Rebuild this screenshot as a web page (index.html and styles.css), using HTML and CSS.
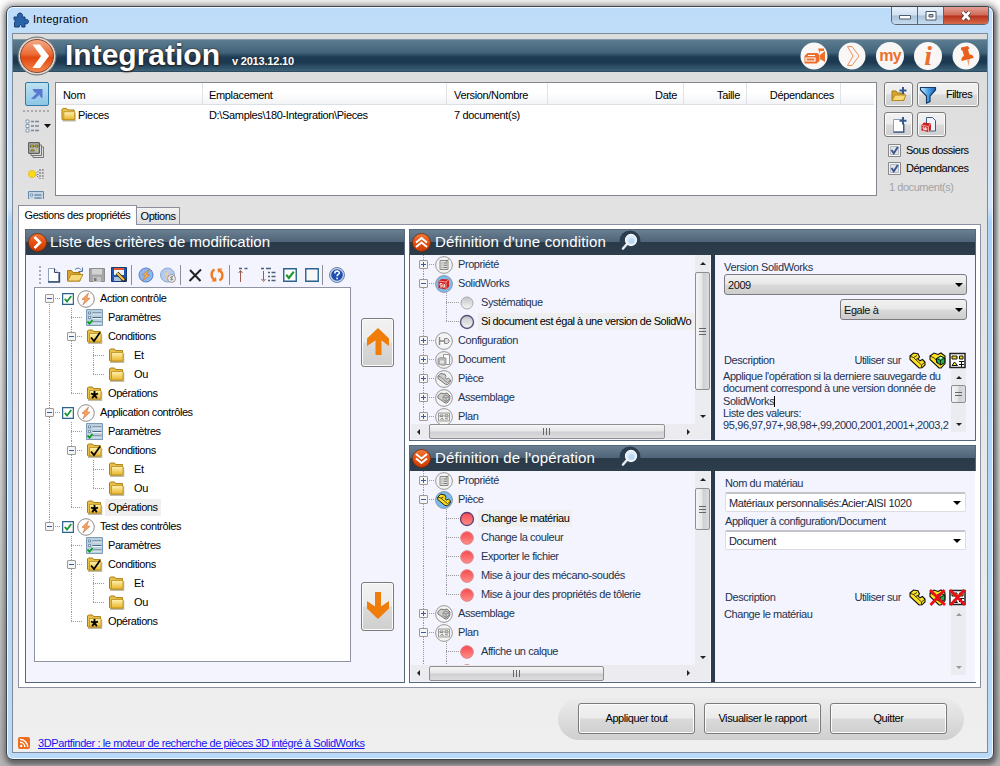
FILE: index.html
```html
<!DOCTYPE html>
<html lang="fr">
<head>
<meta charset="utf-8">
<title>Integration</title>
<link rel="stylesheet" href="styles.css">
</head>
<body>
<svg class="defs" width="0" height="0" aria-hidden="true">
  <defs>
    <linearGradient id="gold" x1="0" y1="0" x2="0" y2="1"><stop offset="0" stop-color="#fff3b0"/><stop offset="1" stop-color="#e9b52c"/></linearGradient>
    <linearGradient id="redb" x1="0" y1="0" x2="0" y2="1"><stop offset="0" stop-color="#f54a50"/><stop offset=".5" stop-color="#fb6a6a"/><stop offset="1" stop-color="#ff8f8a"/></linearGradient>
    <linearGradient id="greyb" x1="0" y1="0" x2="0" y2="1"><stop offset="0" stop-color="#c4c4c8"/><stop offset="1" stop-color="#f6f6f6"/></linearGradient>
    <linearGradient id="orb" x1="0" y1="0" x2="0" y2="1"><stop offset="0" stop-color="#f47b3c"/><stop offset=".5" stop-color="#e4500f"/><stop offset="1" stop-color="#c93c04"/></linearGradient>
    <linearGradient id="fun" x1="0" y1="0" x2="1" y2="0"><stop offset="0" stop-color="#d5f0ff"/><stop offset=".5" stop-color="#4aa3e6"/><stop offset="1" stop-color="#1b62b4"/></linearGradient>
    <symbol id="folder" viewBox="0 0 17 16"><path d="M2 14.600h13.500V6" fill="none" stroke="#8d8666" stroke-width="1.600" opacity=".55"/><path d="M1.500 13V2.500l1-1h4l1.200 1.600h6.800V13.500h-12z" fill="#e9c04a" stroke="#a97d12"/><path d="M3.500 5h11.500v8.500H3.500z" fill="url(#gold)" stroke="#b98d1d" stroke-width=".8"/></symbol>
    <symbol id="foldercheck" viewBox="0 0 17 16"><use href="#folder"/><path d="M5 9l3 3.500L14 4" fill="none" stroke="#000" stroke-width="1.700"/></symbol>
    <symbol id="folderstar" viewBox="0 0 17 16"><use href="#folder"/><path d="M8.500 5.500v4M8.500 9.300L5 8M8.500 9.300L12 8M8.500 9.300l-2.300 3.400M8.500 9.300l2.300 3.400" fill="none" stroke="#000" stroke-width="1.800"/></symbol>
    <symbol id="params" viewBox="0 0 17 17"><path d="M.5.5h16v16H.5z" fill="#bccfdd" stroke="#7b9db8"/><path d="M6.500 4h9M6.500 8.500h9M6.500 13h9" stroke="#47698a"/><path d="M6.500 5h9M6.500 9.500h9M6.500 14h9" stroke="#eef6fb"/><path d="M2.500 3h2v2h-2zM2.500 7.500h2v2h-2z" fill="#fff" stroke="#5b7a97" stroke-width=".8"/><path d="M1.500 12.500l2 2.200L6.500 11" stroke="#0a9a1c" stroke-width="1.800" fill="none"/></symbol>
    <symbol id="bolt" viewBox="0 0 18 18"><circle cx="9" cy="9" r="8.300" fill="#fdfdfd" stroke="#8e8e8e"/><path d="M11.500 3L5 9.300l3 .4L5.800 15 13 8.300l-3.200-.4z" fill="#f9a457" stroke="#c4724a" stroke-width=".6"/></symbol>
    <symbol id="boltblue" viewBox="0 0 18 18"><circle cx="9" cy="9" r="7" fill="#8db5ee" stroke="#5780c4"/><path d="M12 3.500L5.500 9l3 .5L5.500 15l7-6-3-.6z" fill="#fbb24f" stroke="#b87430" stroke-width=".6"/></symbol>
    <symbol id="boltgrey" viewBox="0 0 18 18"><circle cx="8.500" cy="9" r="7" fill="#b4cbf0" stroke="#8da8d4"/><path d="M11 3.500L5 9l3 .5L5.500 15l6-6-3-.6z" fill="#f3cb97"/><circle cx="12.500" cy="12.500" r="4" fill="#e6e6e6" stroke="#999"/><path d="M14 11c-2-1-3 .8-1.500 1.400s1 2-1 1.200" fill="none" stroke="#666"/></symbol>
    <symbol id="new" viewBox="0 0 18 18"><path d="M4.500 2.500h6l4 4v9h-10z" fill="#fff" stroke="#8ea0ba"/><path d="M4 16h11.500V6" stroke="#33496e" stroke-width="1.300" fill="none"/><path d="M10.500 2.500v4h4" fill="#dce6f4" stroke="#33496e"/></symbol>
    <symbol id="open" viewBox="0 0 18 18"><path d="M1.500 15V4.500h4l1.500 2h7V15z" fill="#d9a531" stroke="#a67a14"/><path d="M1.500 15L5 8.500h12L13.500 15z" fill="#f8d97a" stroke="#b58a1e"/><path d="M9 3.500c3-2.500 5-1 6.500 1M16.500 1.500v4h-4" fill="none" stroke="#54749a"/></symbol>
    <symbol id="save" viewBox="0 0 18 18"><path d="M1.500 2.500h15v13h-15z" fill="#a6a6a6" stroke="#8c8c8c"/><path d="M4 3h10v5.500H4z" fill="#d2d2d2"/><path d="M5 11h8v5H5z" fill="#c4c4c4"/><path d="M6 12h2.500v3H6z" fill="#777"/></symbol>
    <symbol id="saveas" viewBox="0 0 18 18"><path d="M1.500 1.500h15v14h-15z" fill="#1f56b0" stroke="#173a78"/><path d="M4 2h10v7H4z" fill="#eef3fb"/><path d="M4 2h10v2H4z" fill="#e4582a"/><path d="M4 11h7v4H4z" fill="#a9bfdf"/><path d="M7 7l8 8" stroke="#2b2410" stroke-width="3.800"/><path d="M7 7l7 7" stroke="#f5c341" stroke-width="2.200"/></symbol>
    <symbol id="del" viewBox="0 0 18 18"><path d="M4 4l10.500 11M15 3.500L3.500 15" stroke="#222" stroke-width="2"/></symbol>
    <symbol id="sync" viewBox="0 0 18 18"><path d="M6.500 3.500c-3.500 2-4 7-.5 10" fill="none" stroke="#f07a1a" stroke-width="2.400"/><path d="M8.500 15.500H3.500L8 11z" fill="#f07a1a"/><path d="M11.500 14.500c3.500-2 4-7 .5-10" fill="none" stroke="#f07a1a" stroke-width="2.400"/><path d="M9.500 2.500h5L10 7z" fill="#f07a1a"/></symbol>
    <symbol id="lines1" viewBox="0 0 18 18"><path d="M5.500 5v11M3.500 7l2-2.500L7.500 7" fill="none" stroke="#9a5a4c"/><path d="M4 2.500h3M9.500 2.500h3" stroke="#4d5f77" stroke-width="1.500"/></symbol>
    <symbol id="lines2" viewBox="0 0 18 18"><path d="M4.500 5v9M2.500 13l2 2.500 2-2.500" fill="none" stroke="#9a5a4c"/><path d="M2 2.500h3M7 2.500h5M9 6.500h2M12.500 6.500h4M9 10.500h2M12.500 10.500h4M9 14.500h2M12.500 14.500h4" stroke="#4d5f77" stroke-width="1.400"/></symbol>
    <symbol id="chk" viewBox="0 0 13 13"><path d="M.7.7h11.600v11.600H.7z" fill="#fff" stroke="#2b6290" stroke-width="1.300"/><path d="M3 6.300l2.500 3L10 3.300" fill="none" stroke="#1c9a2c" stroke-width="2"/></symbol>
    <symbol id="unchk" viewBox="0 0 13 13"><path d="M.7.7h11.600v11.600H.7z" fill="#f7f7f5" stroke="#2b6290" stroke-width="1.300"/></symbol>
    <symbol id="wincheck" viewBox="0 0 13 13"><path d="M.5.5h12v12H.5z" fill="#f5f5f5" stroke="#85878a"/><path d="M2.500 2.500h8v8h-8z" fill="#dfe3ea" stroke="#b5b9bf"/><path d="M3.500 6l2.300 3.200L9.800 3" fill="none" stroke="#3c538f" stroke-width="1.900"/></symbol>
    <symbol id="help" viewBox="0 0 18 18"><circle cx="9" cy="9" r="7.500" fill="#c5d4ea" stroke="#6c83a8"/><circle cx="9" cy="9" r="5.800" fill="#1e4fae"/><path d="M6.800 7.500c0-3.200 4.600-3 4.600-.5 0 1.500-2.300 1.500-2.300 3.200M9.100 11.500v1.700" fill="none" stroke="#fff" stroke-width="1.500"/></symbol>
    <symbol id="gdoc" viewBox="0 0 18 18"><circle cx="9" cy="9" r="8.400" fill="#f4f4f4" stroke="#999"/><path d="M5 4.500h8v9H5z" fill="#e2e2e2" stroke="#888"/><path d="M6.500 7h1M8.500 7h3.500M6.500 9.200h1M8.500 9.200h3.500M6.500 11.500h1M8.500 11.500h3.500" stroke="#777"/><path d="M11 6l3-3.500" stroke="#888"/></symbol>
    <symbol id="gsw" viewBox="0 0 18 18"><circle cx="9" cy="9" r="8.400" fill="#7dbbe9" stroke="#8797a8"/><path d="M3.500 6l3-2 7.500.5v7l-3 3-7.500-1.500z" fill="#cf1f1f"/><path d="M3.500 6l7.500 1v7.500M11 7l3-2.500" fill="none" stroke="#f39b95"/><path d="M7 8.500H5v1.700h2V12H5M8 8.500v3.700h1.500V9" stroke="#fff" fill="none" stroke-width=".8"/></symbol>
    <symbol id="gconf" viewBox="0 0 18 18"><circle cx="9" cy="9" r="8.400" fill="#f4f4f4" stroke="#999"/><path d="M4.500 5v8M4.500 9h4.500" stroke="#888" stroke-width="1.400"/><path d="M9.500 6.500h3l1.500 1.500v2l-1.500 1.500h-3z" fill="#ddd" stroke="#888"/></symbol>
    <symbol id="gdocu" viewBox="0 0 18 18"><circle cx="9" cy="9" r="8.400" fill="#eee" stroke="#999"/><path d="M8.500 3.500h6v10h-6z" fill="#fafafa" stroke="#999"/><path d="M3 8l2-1.500 6 .5v6l-2 1.500-6-1.500z" fill="#b5b5b5" stroke="#888" stroke-width=".7"/><path d="M5 9.500h4v3H5z" fill="#e5e5e5"/></symbol>
    <symbol id="gpart" viewBox="0 0 18 18"><circle cx="9" cy="9" r="8.400" fill="#f4f4f4" stroke="#999"/><path d="M3 6l3-2.500 4 .8 1 2.200-1 1.200 1.500 1.300 2-.8 2 1.800-.5 2.500-2.500 2-2-.2L3 8.500z" fill="#cfcfcf" stroke="#777"/><path d="M3 6l3 1.200 6.500 5.300 2.500-2" stroke="#888" fill="none"/></symbol>
    <symbol id="gasm" viewBox="0 0 18 18"><circle cx="9" cy="9" r="8.400" fill="#f4f4f4" stroke="#999"/><path d="M3 6.500l3-2.500 3 .8 3-.8 3 3-.5 4-2.500 3-2-.2L3 9z" fill="#cfcfcf" stroke="#777"/><path d="M8 7.500l3-1.500 3 1.500v3l-3 2-3-2zM8 7.500l3 1.500 3-1.500M11 9v3.500" stroke="#888" fill="none"/></symbol>
    <symbol id="gplan" viewBox="0 0 18 18"><circle cx="9" cy="9" r="8.400" fill="#f4f4f4" stroke="#999"/><path d="M3.500 5h11v8h-11z" fill="#ececec" stroke="#999"/><path d="M5 7h3v1.500H5zM10 6.800h3v2h-3zM5.500 12l1.500-2 1.500 2M10 10.800h3" fill="none" stroke="#888"/></symbol>
    <symbol id="ypart" viewBox="0 0 18 18"><circle cx="9" cy="9" r="8.400" fill="#7dbbe9" stroke="#7f93a8"/><path d="M2.800 6l3-2.800 4.200.8 1 2.500-1 1.200 1.500 1.300 2-.8 2 1.800-.5 2.500-2.500 2.200-2.500-.2L2.800 8.500z" fill="#ffe11a" stroke="#222"/><path d="M3 6l3 1.200 6.500 5.500 2.500-2M6 7.200L8.500 6" stroke="#222" fill="none" stroke-width=".8"/></symbol>
    <symbol id="part" viewBox="0 0 17 17"><path d="M1 4L4.500 1l4.500.8L10.500 5 9 7l2 1.800 2.500-1.300L16 10v3l-3 2.800-3 .2L1 7.500z" fill="#ffe21f" stroke="#111" stroke-width="1.100"/><path d="M1 4.200l3.500 1.300 8 7.500 3.500-3M4.500 5.500L8 3.500M12.500 13v3M6.500 7.500L9 6.500" stroke="#111" fill="none" stroke-width=".8"/></symbol>
    <symbol id="asm" viewBox="0 0 17 17"><path d="M1 4L5 1l4 1.500L12 1l4 3v7.500L12 16h-2L1 7.500z" fill="#ffe21f" stroke="#111" stroke-width="1.100"/><path d="M7.500 6.500l4-2.500 4.300 2v4.500l-4 2.500-4.300-2.500z" fill="#23b34a" stroke="#111"/><path d="M7.500 6.500l4 2 4.300-2.500M11.500 8.500V13M1 4.200l4.500 1.800 3.500 5" stroke="#111" fill="none" stroke-width=".8"/><path d="M10 6l1.800-1 1.800.9-1.800 1.200z" fill="#fff"/></symbol>
    <symbol id="drw" viewBox="0 0 17 17"><path d="M1 1.500h15v14H1z" fill="#fff" stroke="#222" stroke-width="1.500"/><path d="M3 4h5v3H3zM10.500 4h3.500v3h-3.500zM3 13.500L5.500 10l3 3.500z" fill="#f5d81c" stroke="#111"/><path d="M10 9.500h5M10 12.500h5M12.500 9v6" stroke="#111"/></symbol>
    <symbol id="cross" viewBox="0 0 17 17"><path d="M1 1l15 15M15.500 1L1.500 16" stroke="#e80f16" stroke-width="2.800"/></symbol>
    <symbol id="red" viewBox="0 0 16 16"><circle cx="8" cy="8" r="6.300" fill="url(#redb)" stroke="#dd8080"/></symbol>
    <symbol id="redsel" viewBox="0 0 16 16"><circle cx="8" cy="8" r="6.500" fill="url(#redb)" stroke="#5e3f78" stroke-width="1.300"/></symbol>
    <symbol id="grey" viewBox="0 0 16 16"><circle cx="8" cy="8" r="6" fill="url(#greyb)" stroke="#aaa"/></symbol>
    <symbol id="greysel" viewBox="0 0 16 16"><circle cx="8" cy="8" r="6.500" fill="url(#greyb)" stroke="#55557c" stroke-width="1.400"/></symbol>
    <symbol id="loupe" viewBox="0 0 22 25"><circle cx="11" cy="11" r="10.500" fill="#2b3c4c"/><path d="M8 14l-4 4.500" stroke="#dfe9f2" stroke-width="2.600" stroke-linecap="round"/><circle cx="12" cy="10" r="5.500" fill="#dcebf8" stroke="#f8fbff" stroke-width="1.300"/><circle cx="12.500" cy="11" r="3" fill="#bcd7f0"/></symbol>
    <symbol id="rnd" viewBox="0 0 19 19"><circle cx="9.500" cy="9.500" r="9" fill="url(#orb)" stroke="#7a2a08" stroke-width=".8"/></symbol>
  </defs>
</svg>

<div class="window">
  <header class="titlebar">
    <svg class="puzzle" viewBox="0 0 16 16"><path d="M1 5h4c-1.500-2 0-4 2-4s3.300 2 2 4h3v3c2-1.300 3.500-.3 3.500 1.500S14 12.500 12 11.500V15H8.700c.8-3-3-3-2.400 0H1.500v-4.500C2.500 9 2.300 8 1 7.500z" fill="#2a62a8" stroke="#173f77"/></svg>
    <span class="caption">Integration</span>
    <div class="winbtns">
      <div class="wb"><svg viewBox="0 0 26 17"><path d="M7.500 8.500h11v3.500h-11z" fill="#fff" stroke="#4f5b6b"/></svg></div>
      <div class="wb"><svg viewBox="0 0 26 17"><path d="M8 4.500h10v8.500H8z" fill="#fff" stroke="#4f5b6b"/><path d="M11 7.500h4v2.500h-4z" fill="#a9bdd3" stroke="#4f5b6b"/></svg></div>
      <div class="wb close"><svg viewBox="0 0 45 17"><path d="M18.500 5l7 7.500M25.500 5l-7 7.500" stroke="#5a3a40" stroke-width="4.400"/><path d="M18.500 5l7 7.500M25.500 5l-7 7.500" stroke="#fff" stroke-width="2.600"/></svg></div>
    </div>
  </header>

  <main class="client">
    <div class="banner">
      <svg class="logo" viewBox="0 0 40 40"><defs><linearGradient id="lg" x1="0" y1="0" x2="0" y2="1"><stop offset="0" stop-color="#f5ab88"/><stop offset=".45" stop-color="#ea6a35"/><stop offset=".55" stop-color="#e2470e"/><stop offset="1" stop-color="#f68a4e"/></linearGradient></defs><circle cx="20" cy="20" r="19" fill="#d9d6d5" stroke="#6d6a6a"/><circle cx="20" cy="20" r="16.500" fill="url(#lg)" stroke="#8b4a30"/><path d="M15.500 8.500h7.500L32 20 23 32h-7.500l8.500-12z" fill="#fff"/></svg>
      <h1>Integration</h1>
      <span class="version">v 2013.12.10</span>
      <div class="round-icons">
        <svg viewBox="0 0 28 28"><circle cx="14" cy="14" r="13.500" fill="#f9f7f5"/><path d="M4.500 14l3-3h10l2 2v6l-3 2.500H4.500z" fill="#ec6f2c"/><path d="M20 13l5-4v11l-5-3zM18 6.500h6v2.500h-4v3" fill="#ec6f2c"/><path d="M6 16h9v3H6zM8 13.500h7" fill="none" stroke="#fff" stroke-width="1.200"/></svg>
        <svg viewBox="0 0 28 28"><circle cx="14" cy="14" r="13.500" fill="#f9f7f5"/><path d="M9.500 4.500h4.500l7 9.500-7 9.500H9.500l5.500-9.500z" fill="none" stroke="#f0905c"/></svg>
        <div class="my">my</div>
        <div class="inf">i</div>
        <svg viewBox="0 0 28 28"><circle cx="14" cy="14" r="13.500" fill="#f9f7f5"/><path d="M9 5.500l7-1.500 1.500 2.500-1.500 1 1.500 5c3 .2 4 1.500 4 3.500L9.500 19c-.5-2.500.5-4 2.500-5l-1.500-5.500-1.500-.5z" fill="#e85f1c"/><path d="M15 17.500l1.800 7 .8-7.500z" fill="#efa27c"/></svg>
      </div>
    </div>

    <section class="files">
      <div class="sidebar">
        <div class="sb-on"><svg viewBox="0 0 24 24"><path d="M7 6.500h11V17l-3-2.500V12.500l-5.500 5H5.500l6.500-7H9.500z" fill="#5b78d0"/></svg></div>
        <div class="sb-dots"></div>
        <svg class="sb-list" viewBox="0 0 26 14"><path d="M1 1h3v3H1zM1 5.500h3v3H1zM1 10h3v3H1z" fill="#fff" stroke="#8596b0"/><path d="M6 2.500h3M10 2.500h4M6 7h3M10 7h4M6 11.500h3M10 11.500h4" stroke="#7a879a" stroke-width="1.400"/><path d="M19 5h7l-3.500 4z" fill="#111"/></svg>
        <svg class="sb-i2" viewBox="0 0 16 16"><path d="M5 5h10.500v10.500H5z" fill="#ddd" stroke="#777"/><path d="M3 3h10.500v10.500H3z" fill="#ddd" stroke="#777"/><path d="M.7.7h10.600v10.600H.7z" fill="#b9b9a8" stroke="#444"/><path d="M2.500 3h3v2h-3zM7 3h3v2H7zM2.500 9l2-2 2 2z" fill="#e8d020" stroke="#333" stroke-width=".6"/></svg>
        <svg class="sb-i3" viewBox="0 0 16 12"><circle cx="4" cy="6" r="3.600" fill="#fbdc12" stroke="#e0a818" stroke-width=".6"/><path d="M8.500 5l2-2M8.500 6.500h2M8.500 7.500l2 2" stroke="#888"/><path d="M12 1v10M14.800 1v10" stroke="#999" stroke-width="1.800" stroke-dasharray="2 1"/></svg>
        <svg class="sb-i4" viewBox="0 0 16 8"><path d="M.5 8V.5h15V8" fill="#c4d6e6" stroke="#6688a6"/><path d="M2.500 3h2v2h-2z" fill="#fff" stroke="#5b7a97" stroke-width=".7"/><path d="M6.500 4h7M6.500 7h7" stroke="#47698a"/></svg>
      </div>
      <div class="filelist">
        <div class="fl-head">
          <span class="c1">Nom</span><span class="c2">Emplacement</span><span class="c3">Version/Nombre</span><span class="c4 r">Date</span><span class="c5 r">Taille</span><span class="c6 r">Dépendances</span><span class="c7"></span>
        </div>
        <div class="fl-row"><span class="c1"><svg class="fi" viewBox="0 0 17 16"><use href="#folder"/></svg>Pieces</span><span class="c2">D:\Samples\180-Integration\Pieces</span><span class="c3">7 document(s)</span></div>
      </div>
      <div class="actions">
        <div class="arow">
          <button class="btn sq"><svg viewBox="0 0 18 18"><path d="M2 14.500V5h4l1.500 2H14v7.500z" fill="#d9a531" stroke="#a67a14"/><path d="M2 14.500L5 9h11l-2.500 5.500z" fill="#f8d97a" stroke="#b58a1e"/><path d="M13 1v7M9.500 4.500h7" stroke="#35588e" stroke-width="2"/></svg></button>
          <button class="btn filt"><svg viewBox="0 0 18 18"><path d="M1.500 1.500h15v2.500L11 10v5.500L7.500 17v-7L1.500 4z" fill="url(#fun)" stroke="#183a66" stroke-width="1.200"/></svg><span>Filtres</span></button>
        </div>
        <div class="arow">
          <button class="btn sq"><svg viewBox="0 0 18 18"><path d="M3.500 3.500h10V16h-10z" fill="#fff" stroke="#8aa0c0"/><path d="M3.500 16.200h10.300V8" stroke="#33517f" fill="none" stroke-width="1.300"/><path d="M13 1v7.500M9.500 4.700h7" stroke="#35588e" stroke-width="2"/></svg></button>
          <button class="btn sq sw"><svg viewBox="0 0 18 18"><path d="M6.500 1.500h6l3 3V15h-9z" fill="#eef3fa" stroke="#3d5a86"/><path d="M1.500 9l2.500-2.500 7 1v6L8.500 16l-7-1.500z" fill="#c81e1e"/><path d="M1.500 9l7 1.500V16M8.500 10.500l2.500-3" stroke="#f2a09a" fill="none"/><path d="M4.500 11H3v1.500h1.500V14H3M5.500 11v3h1.300v-2.500" stroke="#fff" fill="none" stroke-width=".8"/></svg></button>
        </div>
        <label class="ck"><svg viewBox="0 0 13 13"><use href="#wincheck"/></svg>Sous dossiers</label>
        <label class="ck"><svg viewBox="0 0 13 13"><use href="#wincheck"/></svg>Dépendances</label>
        <div class="count">1 document(s)</div>
      </div>
    </section>

    <div class="tabs"><div class="tab on">Gestions des propriétés</div><div class="tab">Options</div></div>

    <section class="page">
      <div class="panel left">
        <div class="phead"><svg class="orbi" viewBox="0 0 19 19"><use href="#rnd"/><path d="M6.500 4l5.500 5.500-5.500 5.500" fill="none" stroke="#fff" stroke-width="2.600"/></svg><h2 class="w1">Liste des critères de modification</h2></div>
        <div class="lbody">
          <div class="lcol">
            <div class="toolbar">
              <i class="grip"></i>
              <svg><use href="#new"/></svg><svg><use href="#open"/></svg><svg><use href="#save"/></svg><svg><use href="#saveas"/></svg>
              <i class="sep"></i><svg><use href="#boltblue"/></svg><svg><use href="#boltgrey"/></svg>
              <i class="sep"></i><svg><use href="#del"/></svg><svg><use href="#sync"/></svg>
              <i class="sep"></i><svg><use href="#lines1"/></svg><svg class="wide"><use href="#lines2"/></svg><svg class="c13"><use href="#chk"/></svg><svg class="c13"><use href="#unchk"/></svg>
              <i class="sep"></i><svg><use href="#help"/></svg>
            </div>
            <div class="tree crit">
              <div class="row"><i class="g first"><b></b></i><svg class="ck12"><use href="#chk"/></svg><svg class="i18"><use href="#bolt"/></svg><span>Action contrôle</span></div>
              <div class="row"><i class="g v"></i><i class="g v h"></i><svg class="i17"><use href="#params"/></svg><span>Paramètres</span></div>
              <div class="row"><i class="g v"></i><i class="g v h"><b></b></i><svg class="i17"><use href="#foldercheck"/></svg><span>Conditions</span></div>
              <div class="row"><i class="g v"></i><i class="g v"></i><i class="g v h"></i><svg class="i17"><use href="#folder"/></svg><span class="s2">Et</span></div>
              <div class="row"><i class="g v"></i><i class="g v"></i><i class="g l h"></i><svg class="i17"><use href="#folder"/></svg><span class="s2">Ou</span></div>
              <div class="row"><i class="g v"></i><i class="g l h"></i><svg class="i17"><use href="#folderstar"/></svg><span>Opérations</span></div>
              <div class="row"><i class="g v h"><b></b></i><svg class="ck12"><use href="#chk"/></svg><svg class="i18"><use href="#bolt"/></svg><span>Application contrôles</span></div>
              <div class="row"><i class="g v"></i><i class="g v h"></i><svg class="i17"><use href="#params"/></svg><span>Paramètres</span></div>
              <div class="row"><i class="g v"></i><i class="g v h"><b></b></i><svg class="i17"><use href="#foldercheck"/></svg><span>Conditions</span></div>
              <div class="row"><i class="g v"></i><i class="g v"></i><i class="g v h"></i><svg class="i17"><use href="#folder"/></svg><span class="s2">Et</span></div>
              <div class="row"><i class="g v"></i><i class="g v"></i><i class="g l h"></i><svg class="i17"><use href="#folder"/></svg><span class="s2">Ou</span></div>
              <div class="row"><i class="g v"></i><i class="g l h"></i><svg class="i17"><use href="#folderstar"/></svg><span class="hl">Opérations</span></div>
              <div class="row"><i class="g l h"><b></b></i><svg class="ck12"><use href="#chk"/></svg><svg class="i18"><use href="#bolt"/></svg><span>Test des contrôles</span></div>
              <div class="row"><i class="g"></i><i class="g v h"></i><svg class="i17"><use href="#params"/></svg><span>Paramètres</span></div>
              <div class="row"><i class="g"></i><i class="g v h"><b></b></i><svg class="i17"><use href="#foldercheck"/></svg><span>Conditions</span></div>
              <div class="row"><i class="g"></i><i class="g v"></i><i class="g v h"></i><svg class="i17"><use href="#folder"/></svg><span class="s2">Et</span></div>
              <div class="row"><i class="g"></i><i class="g v"></i><i class="g l h"></i><svg class="i17"><use href="#folder"/></svg><span class="s2">Ou</span></div>
              <div class="row"><i class="g"></i><i class="g l h"></i><svg class="i17"><use href="#folderstar"/></svg><span>Opérations</span></div>
            </div>
          </div>
          <div class="moves">
            <button class="btn mv"><svg viewBox="0 0 22 27"><path d="M11 0l11 10.500V18l-7.500-5.500V27h-6V12.500L0 18v-7.500z" fill="#f07c0a"/></svg></button>
            <button class="btn mv"><svg viewBox="0 0 22 27"><path d="M11 27L0 16.500V9l8 5.500V0h6v14.500L22 9v7.500z" fill="#f07c0a"/></svg></button>
          </div>
        </div>
      </div>

      <div class="rightcol">
        <div class="panel cond">
          <div class="phead"><svg class="orbi" viewBox="0 0 19 19"><use href="#rnd"/><path d="M4 9.500l5.500-4.500L15 9.500M4 14l5.500-4.500L15 14" fill="none" stroke="#fff" stroke-width="2"/></svg><h2 class="w2">Définition d'une condition</h2><svg class="loupe"><use href="#loupe"/></svg></div>
          <div class="pbody">
            <div class="scroller">
              <div class="tree kinds">
                <div class="row"><i class="g v h"><b class="plus"></b></i><svg class="i18"><use href="#gdoc"/></svg><span>Propriété</span></div>
                <div class="row"><i class="g v h"><b></b></i><svg class="i18"><use href="#gsw"/></svg><span>SolidWorks</span></div>
                <div class="row"><i class="g v"></i><i class="g v h"></i><svg class="i16"><use href="#grey"/></svg><span>Systématique</span></div>
                <div class="row"><i class="g v"></i><i class="g l h"></i><svg class="i16"><use href="#greysel"/></svg><span class="hl fill">Si document est égal à une version de SolidWo</span></div>
                <div class="row"><i class="g v h"><b class="plus"></b></i><svg class="i18"><use href="#gconf"/></svg><span>Configuration</span></div>
                <div class="row"><i class="g v h"><b class="plus"></b></i><svg class="i18"><use href="#gdocu"/></svg><span>Document</span></div>
                <div class="row"><i class="g v h"><b class="plus"></b></i><svg class="i18"><use href="#gpart"/></svg><span>Pièce</span></div>
                <div class="row"><i class="g v h"><b class="plus"></b></i><svg class="i18"><use href="#gasm"/></svg><span>Assemblage</span></div>
                <div class="row"><i class="g l h"><b class="plus"></b></i><svg class="i18"><use href="#gplan"/></svg><span>Plan</span></div>
              </div>
              <div class="vs"><i class="up"></i><div class="thumb t1"></div><i class="dn"></i></div>
              <div class="hs"><i class="lf"></i><div class="thumb h1"></div><i class="rt"></i></div>
            </div>
            <div class="splitter"></div>
            <div class="form f1">
              <div class="lab">Version SolidWorks</div>
              <div class="combo grad">2009<i></i></div>
              <div class="combo grad small">Egale à<i></i></div>
              <div class="dline"><span>Description</span><span class="use">Utiliser sur</span><svg><use href="#part"/></svg><svg><use href="#asm"/></svg><svg class="lasti"><use href="#drw"/></svg></div>
              <div class="desc"><p>Applique l'opération si la derniere sauvegarde du<br>document correspond à une version donnée de<br>SolidWorks<i class="caret"></i><br>Liste des valeurs:<br><span class="vals">95,96,97,97+,98,98+,99,2000,2001,2001+,2003,2</span></p><div class="vs mini"><i class="up"></i><div class="thumb t3"></div><i class="dn"></i></div></div>
            </div>
          </div>
        </div>

        <div class="panel oper">
          <div class="phead"><svg class="orbi" viewBox="0 0 19 19"><use href="#rnd"/><path d="M4 5l5.500 4.500L15 5M4 9.500l5.500 4.500L15 9.500" fill="none" stroke="#fff" stroke-width="2"/></svg><h2 class="w3">Définition de l'opération</h2><svg class="loupe"><use href="#loupe"/></svg></div>
          <div class="pbody">
            <div class="scroller">
              <div class="tree kinds">
                <div class="row"><i class="g v h"><b class="plus"></b></i><svg class="i18"><use href="#gdoc"/></svg><span>Propriété</span></div>
                <div class="row"><i class="g v h"><b></b></i><svg class="i18"><use href="#ypart"/></svg><span>Pièce</span></div>
                <div class="row"><i class="g v"></i><i class="g v h"></i><svg class="i16"><use href="#redsel"/></svg><span class="hl">Change le matériau</span></div>
                <div class="row"><i class="g v"></i><i class="g v h"></i><svg class="i16"><use href="#red"/></svg><span>Change la couleur</span></div>
                <div class="row"><i class="g v"></i><i class="g v h"></i><svg class="i16"><use href="#red"/></svg><span>Exporter le fichier</span></div>
                <div class="row"><i class="g v"></i><i class="g v h"></i><svg class="i16"><use href="#red"/></svg><span>Mise à jour des mécano-soudés</span></div>
                <div class="row"><i class="g v"></i><i class="g l h"></i><svg class="i16"><use href="#red"/></svg><span>Mise à jour des propriétés de tôlerie</span></div>
                <div class="row"><i class="g v h"><b class="plus"></b></i><svg class="i18"><use href="#gasm"/></svg><span>Assemblage</span></div>
                <div class="row"><i class="g v h"><b></b></i><svg class="i18"><use href="#gplan"/></svg><span>Plan</span></div>
                <div class="row"><i class="g v"></i><i class="g v h"></i><svg class="i16"><use href="#red"/></svg><span>Affiche un calque</span></div>
                <div class="row"><i class="g v"></i><i class="g v h"></i><svg class="i16"><use href="#red"/></svg></div>
              </div>
              <div class="vs"><i class="up"></i><div class="thumb t2"></div><i class="dn"></i></div>
              <div class="hs"><i class="lf"></i><div class="thumb h2"></div><i class="rt"></i></div>
            </div>
            <div class="splitter"></div>
            <div class="form f2">
              <div class="lab">Nom du matériau</div>
              <div class="combo">Matériaux personnalisés:Acier:AISI 1020<i></i></div>
              <div class="lab">Appliquer à configuration/Document</div>
              <div class="combo">Document<i></i></div>
              <div class="dline"><span>Description</span><span class="use">Utiliser sur</span><svg><use href="#part"/></svg><svg><use href="#asm"/><use href="#cross"/></svg><svg class="lasti"><use href="#drw"/><use href="#cross"/></svg></div>
              <div class="desc"><p>Change le matériau</p><div class="vs mini off"><i class="up"></i><i class="dn"></i></div></div>
            </div>
          </div>
        </div>
      </div>
    </section>

    <footer class="foot">
      <div class="link"><svg viewBox="0 0 12 12"><rect width="12" height="12" rx="2" fill="#ee6d1f"/><circle cx="3.200" cy="8.900" r="1.200" fill="#fff"/><path d="M2 5.300a4.800 4.800 0 0 1 4.800 4.800M2 2.400a7.700 7.700 0 0 1 7.700 7.700" fill="none" stroke="#fff" stroke-width="1.400"/></svg><a>3DPartfinder : le moteur de recherche de pièces 3D intégré à SolidWorks</a></div>
      <div class="pill"><button class="btn">Appliquer tout</button><button class="btn">Visualiser le rapport</button><button class="btn">Quitter</button></div>
    </footer>
  </main>
</div>
</body>
</html>
```
FILE: styles.css
```css
* { box-sizing: border-box; }
html, body { margin: 0; }
body {
  width: 1000px; height: 766px; overflow: hidden;
  padding: 6px 6px 6px 6px;
  background: linear-gradient(#fff, #f2f2f2 40%, #b5b3b3);
  font: 11px/13px "Liberation Sans", Arial, sans-serif;
  letter-spacing: -0.42px; color: #000;
}
.defs { position: absolute; }
svg { display: block; flex: none; }
button { font: inherit; letter-spacing: inherit; color: inherit; padding: 0; }
i { font-style: normal; }

.window {
  width: 988px; height: 754px; display: flex; flex-direction: column;
  border: 1px solid #3b434d; border-radius: 7px; padding: 0 5px;
  background: linear-gradient(#bddcf9, #d3e7fa 200px, #a9d3f7 215px, #b9daf8);
  box-shadow: inset 0 0 0 1px #f2f8ff, 0 0 7px 3px #77777799, 1px 3px 5px 1px #555;
}
.titlebar { height: 26px; flex: none; display: flex; align-items: flex-start; }
.puzzle { width: 16px; height: 16px; margin: 5px 4px 0 1px; }
.caption { padding-top: 6px; letter-spacing: .3px; }
.winbtns {
  margin: 0 -1px 0 auto; display: flex; height: 18px; overflow: hidden;
  border: 1px solid #5b6673; border-top: 0; border-radius: 0 0 5px 5px;
}
.wb { width: 26px; border-right: 1px solid #5b6673; background: linear-gradient(#e6f1fb, #cfe0f1 48%, #a9c1da 52%, #c6dcf0); }
.wb svg { height: 17px; }
.wb.close { width: 44px; border: 0; background: linear-gradient(#e3a096, #cf6a58 48%, #b7301b 52%, #d66a4a); }

.client { height: 720px; flex: none; border: 1px solid #7f8b98; background: linear-gradient(#dcdcdc, #e2e2e2 25%, #efefef); display: flex; flex-direction: column; }
.banner {
  height: 33px; margin-top: 5px; flex: none; display: flex; align-items: center; padding: 0 7px 0 4px;
  background: linear-gradient(#5c7c90, #42647a 40%, #1e3c55 55%, #1c3850 72%, #3c6277);
  border-top: 1px solid #8197a5; border-bottom: 1px solid #2f4b60;
}
.logo { width: 40px; height: 40px; margin: -3px 0; }
h1 {
  margin: 0 0 0 8px; color: #fff; font: bold 30px/34px "Liberation Sans", sans-serif;
  width: 156px; letter-spacing: 0; text-shadow: 0 1px 2px #1a1a1a, 0 0 2px #402010; padding-bottom: 1px;
}
.version { color: #fff; font-weight: bold; margin: 11px 0 0 11px; letter-spacing: -.2px; text-shadow: 0 0 2px #222; }
.round-icons { margin-left: auto; display: flex; gap: 10px; }
.round-icons > * { width: 28px; height: 28px; }
.my, .inf { border-radius: 50%; background: #f9f7f5; color: #ec6f2c; text-align: center; font-weight: bold; }
.my { font-size: 16px; line-height: 27px; letter-spacing: -.8px; }
.inf { font: italic bold 28px/28px "Liberation Serif", serif; }

.files { height: 133px; flex: none; display: flex; padding: 10px 0 0 12px; }
.sidebar { width: 30px; flex: none; }
.sb-on { width: 24px; height: 24px; border: 1px solid #2e7aa8; background: linear-gradient(#bfe0f2, #8cc6e6); border-radius: 2px; }
.sb-on svg { width: 22px; height: 22px; }
.sb-dots { height: 2px; width: 28px; margin: 4px 0 0 -2px; background: repeating-linear-gradient(90deg, #aaa 0 2px, transparent 2px 4px); }
.sb-list { width: 26px; height: 14px; margin-top: 7px; }
.sb-i2 { width: 16px; height: 16px; margin: 9px 0 0 3px; }
.sb-i3 { width: 16px; height: 12px; margin: 10px 0 0 3px; }
.sb-i4 { width: 16px; height: 8px; margin: 11px 0 0 3px; }

.filelist { width: 822px; height: 114px; flex: none; border: 1px solid #82878f; background: #fff; }
.fl-head { display: flex; height: 22px; margin-right: 2px; background: linear-gradient(#fff 45%, #f3f4f6); border-bottom: 1px solid #dcdfe3; }
.fl-head span { border-right: 1px solid #dfe2e6; line-height: 24px; height: 21px; }
.fl-row { display: flex; line-height: 20px; }
.c1 { width: 147px; padding-left: 7px; } .c2 { width: 244px; padding-left: 6px; }
.c3 { width: 101px; padding-left: 7px; } .c4 { width: 136px; } .c5 { width: 63px; } .c6 { width: 94px; }
.fl-head .c7 { border: 0; }
.r { text-align: right; padding-right: 6px; }
.fl-row .c1 { display: flex; padding-left: 4px; }
.fi { width: 17px; height: 15px; margin: 2px 1px 0 0; }
.fl-head, .fl-row { letter-spacing: -.34px; }

.btn { border: 1px solid #7b7b7b; border-radius: 3px; box-shadow: inset 0 0 0 1px #fbfbfb; background: linear-gradient(#f2f2f2, #ebebeb 49%, #dadada 51%, #cfcfcf); }
.actions { margin-left: 7px; width: 98px; }
.arow { display: flex; gap: 4px; margin-bottom: 5px; }
.sq { width: 29px; height: 25px; display: flex; align-items: center; justify-content: center; }
.sq svg, .filt svg { width: 18px; height: 18px; }
.sw svg { margin-right: 5px; }
.filt { width: 62px; height: 25px; display: flex; align-items: center; padding-left: 1px; }
.filt span { margin-left: 9px; letter-spacing: -.55px; }
.ck { display: flex; align-items: center; height: 18px; gap: 5px; padding-left: 4px; font-size: 11px; letter-spacing: -.5px; }
.arow + .ck { margin-top: -1px; }
.ck svg { width: 13px; height: 13px; }
.count { margin: 4px 0 0 5px; color: #a3a3a3; letter-spacing: -.45px; }

.tabs { height: 19px; flex: none; display: flex; align-items: flex-end; padding-left: 5px; position: relative; }
.tab { height: 17px; width: 43px; border: 1px solid #8b8fa0; border-left: 0; border-bottom: 0; text-align: center; line-height: 17px; background: linear-gradient(#f3f3f3, #dedede); }
.tab.on { width: 119px; height: 20px; margin-bottom: -1px; border-left: 1px solid #8b8fa0; background: #fff; line-height: 18px; letter-spacing: -.45px; }

.page { width: 963px; height: 464px; flex: none; margin-left: 5px; border: 1px solid #8b90a5; background: #fff; padding: 4px 4px 5px 6px; display: flex; gap: 4px; }
.panel { border: 1px solid #56677a; background: #f4f4ff; }
.left { width: 380px; height: 454px; flex: none; }
.rightcol { display: flex; flex-direction: column; gap: 4px; width: 567px; flex: none; }
.cond { height: 212px; } .oper { height: 238px; }
.phead { height: 25px; display: flex; align-items: center; padding-left: 2px; background: linear-gradient(#6b7f92, #506579 46%, #2b3a49 50%, #2c3d4c); overflow: visible; }
.orbi { width: 19px; height: 19px; }
h2 { margin: 0 0 2px 4px; font: 15px/20px "Liberation Sans", sans-serif; color: #fff; white-space: nowrap; }
.w1 { width: 224px; letter-spacing: .05px; margin-left: 3px; } .w2, .w3 { width: 184px; letter-spacing: .15px; }
.loupe { width: 22px; height: 25px; }

.lbody { display: flex; }
.lcol { width: 325px; padding: 7px 0 0 8px; flex: none; }
.toolbar { height: 25px; display: flex; align-items: center; padding-left: 5px; }
.toolbar svg { width: 18px; height: 18px; margin-right: 4px; }
.toolbar svg.c13 { width: 14px; height: 14px; margin: 0 4px; }
.toolbar svg.wide { margin: 0 2px 0 2px; }
.grip { width: 2px; height: 18px; margin-right: 3px; background: repeating-linear-gradient(#aab 0 2px, transparent 2px 4px); }
.sep { width: 1px; height: 20px; flex: none; margin: 0 5px 0 -1px; background: #8a8f9a; }
.crit { width: 317px; height: 375px; border: 1px solid #8f93a2; background: #fff; padding: 1px 0 0 3px; }
.row { display: flex; align-items: center; height: 19px; white-space: nowrap; }
.row > span { line-height: 17px; padding: 0 3px; }
.hl { background: #efefef; }
.g { width: 22px; height: 19px; flex: none; display: flex; align-items: center;
  --v: repeating-linear-gradient(#999 0 1px, transparent 1px 2px);
  --h: repeating-linear-gradient(90deg, #999 0 1px, transparent 1px 2px);
  background-repeat: no-repeat; }
.g.v { background-image: var(--v); background-position: 11px 0; background-size: 1px 100%; }
.g.v.h { background-image: var(--v), var(--h); background-position: 11px 0, 11px 9px; background-size: 1px 100%, 13px 1px; }
.g.l { background-image: var(--v), var(--h); background-position: 11px 0, 11px 9px; background-size: 1px 9px, 13px 1px; }
.g.first { background-image: var(--v), var(--h); background-position: 11px 9px, 11px 9px; background-size: 1px 10px, 13px 1px; }
.g b { width: 9px; height: 9px; margin-left: 7px; border: 1px solid #9a9a9a; border-radius: 1px;
  background: linear-gradient(#3f5a9c, #3f5a9c) 1px 3px / 5px 1px no-repeat, #f5f5f5; }
.g b.plus { background: linear-gradient(#3f5a9c, #3f5a9c) 1px 3px / 5px 1px no-repeat, linear-gradient(#3f5a9c, #3f5a9c) 3px 1px / 1px 5px no-repeat, #f5f5f5; }
.ck12 { width: 12px; height: 12px; margin: 0 3px 0 2px; }
.i18 { width: 18px; height: 18px; margin-right: 2px; }
.i17 { width: 17px; height: 17px; margin: 0 2px 0 4px; }
.i16 { width: 16px; height: 16px; margin-right: 3px; }
.crit .i17 + .s2 { margin-left: 4px; }
.moves { margin: 63px 0 0 10px; display: flex; flex-direction: column; gap: 215px; }
.mv { width: 33px; height: 49px; display: flex; align-items: center; justify-content: center; }
.mv svg { width: 22px; height: 27px; margin-bottom: 2px; }

.pbody { display: flex; }
.scroller { display: grid; grid-template-columns: 284px 15px; padding-left: 1px; width: 301px; flex: none; }
.cond .scroller { grid-template-rows: 169px 15px; }
.oper .scroller { grid-template-rows: 194px 16px; }
.kinds { overflow: hidden; padding-left: 1px; color: #1c3350; }
.cond .pbody { height: 185px; } .oper .pbody { height: 211px; }
.kinds .row > span { flex: none; padding: 0 3px; }
.kinds .hl { color: #000; }
.kinds .row > .fill { flex: 1; padding-right: 0; letter-spacing: -.46px; }
.kinds .g { width: 23px; }
.kinds .g + .g { width: 24px; }
.kinds .i18 { margin-right: 2px; }
.vs { width: 15px; background: #ececf0; display: flex; flex-direction: column; align-items: center; padding: 7px 0 6px; }
.vs .dn { margin-top: auto; }
.up, .dn, .lf, .rt { width: 0; height: 0; flex: none; border: 3px solid transparent; }
.up { border-bottom-color: #222; border-top: 0; height: 3px; }
.dn { border-top-color: #222; border-bottom: 0; height: 3px; }
.lf { border-right-color: #222; border-left: 0; width: 3px; }
.rt { border-left-color: #222; border-right: 0; width: 3px; }
.thumb { border: 1px solid #8e8e93; border-radius: 2px; flex: none; }
.vs .thumb { width: 15px; background:
  repeating-linear-gradient(#666 0 1px, transparent 1px 3px) center / 7px 7px no-repeat,
  linear-gradient(90deg, #f5f5f5, #e6e6e8 48%, #cfcfd3 52%, #dcdcdf); }
.t1 { height: 118px; margin-top: 7px; }
.t2 { height: 42px; margin-top: 7px; }
.hs { grid-column: 1 / 3; background: #ececf0; display: flex; align-items: center; padding: 0 20px 0 6px; }
.hs .thumb { height: 15px; margin-left: 9px; background:
  repeating-linear-gradient(90deg, #666 0 1px, transparent 1px 3px) center / 8px 7px no-repeat,
  linear-gradient(#f5f5f5, #e6e6e8 48%, #cfcfd3 52%, #dcdcdf); }
.hs .rt { margin-left: auto; }
.h1 { width: 236px; } .h2 { width: 175px; }
.splitter { width: 4px; background: #2b3b4b; flex: none; }

.form { padding: 6px 9px 0 9px; flex: 1; color: #1c3350; border-right: 1px solid #fff; }
.lab { height: 13px; white-space: nowrap; }
.f1 .lab { letter-spacing: -.35px; }
.combo { width: 243px; height: 20px; border: 1px solid #dcdce2; border-top: 2px solid #c4c4c8; border-radius: 2px; background: #fff; padding-left: 3px; line-height: 16px; display: flex; align-items: center; color: #1a2436; }
.combo i { margin: 0 4px 0 auto; border: 4px solid transparent; border-top-color: #000; border-bottom: 0; }
.combo.grad { border: 1px solid #7b7b80; border-radius: 3px; background: linear-gradient(#f2f2f2, #e8e8e8 48%, #d9d9d9 52%, #cdcdcd); height: 21px; color: #111; }
.combo.grad i { margin-right: 3px; }
.combo.small { width: 127px; margin: 4px 0 0 116px; }
.dline { display: flex; align-items: center; width: 242px; height: 17px; }
.dline svg { width: 17px; height: 17px; margin-left: 3px; }
.use { margin-left: auto; margin-right: 5px; letter-spacing: -.45px; }
.f1 .dline { margin-top: 32px; } .dline .lasti { margin-right: 0; }
.desc { display: flex; width: 242px; }
.desc p { margin: 1px 0 0 -1px; line-height: 12.300px; white-space: nowrap; width: 228px; }
.vals { letter-spacing: -.38px; }
.caret { display: inline-block; width: 1px; height: 11px; background: #000; vertical-align: -2px; }
.mini { width: 15px; padding: 7px 0 6px; margin-left: auto; }
.f1 .mini { height: 63px; }
.t3 { height: 18px; margin-top: 6px; }
.vs .t3 { background-size: 7px 5px, auto; }
.f2 { padding-left: 10px; }
.f2 .lab { margin-bottom: 2px; }
.f2 .combo { width: 241px; margin-bottom: 3px; }
.f2 .dline, .f2 .desc { width: 241px; }
.f2 .dline { margin-top: 39px; }
.f2 .desc p { margin-top: 2px; }
.off { height: 69px; }
.off .up { border-bottom-color: #999; } .off .dn { border-top-color: #999; }

.foot { flex: 1; display: flex; position: relative; padding: 10px 23px 0 5px; justify-content: space-between; }
.link { display: flex; gap: 8px; margin-top: 39px; height: 13px; }
.link svg { width: 12px; height: 12px; }
.link a { color: #1414f0; text-decoration: underline; letter-spacing: -.41px; white-space: nowrap; }
.pill { width: 406px; height: 42px; border-radius: 21px; display: flex; gap: 9px; padding: 5px 0 0 20px; background: linear-gradient(#ececec, #cfcfcf); }
.pill .btn { width: 117px; height: 31px; }
```
